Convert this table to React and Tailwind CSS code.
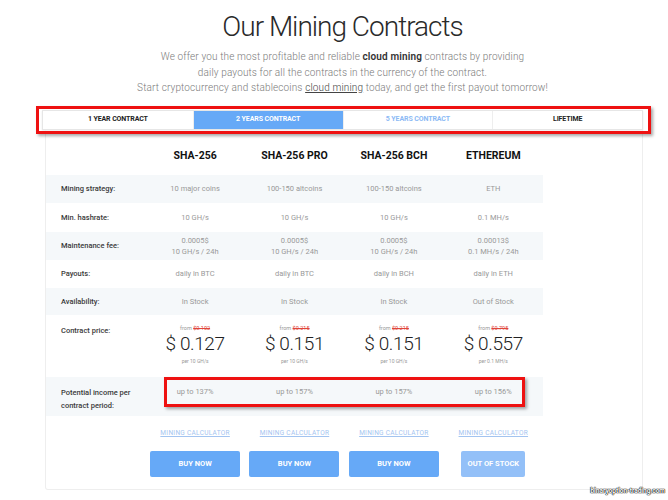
import React from 'react';

const plans = [
  { name: 'SHA-256', strategy: '10 major coins', hash: '10 GH/s', fee: ['0.0005$', '10 GH/s / 24h'], payouts: 'daily in BTC', avail: 'In Stock', old: '$0.102', price: '$ 0.127', per: 'per 10 GH/s', income: 'up to 137%', btn: 'BUY NOW' },
  { name: 'SHA-256 PRO', strategy: '100-150 altcoins', hash: '10 GH/s', fee: ['0.0005$', '10 GH/s / 24h'], payouts: 'daily in BTC', avail: 'In Stock', old: '$0.215', price: '$ 0.151', per: 'per 10 GH/s', income: 'up to 157%', btn: 'BUY NOW' },
  { name: 'SHA-256 BCH', strategy: '100-150 altcoins', hash: '10 GH/s', fee: ['0.0005$', '10 GH/s / 24h'], payouts: 'daily in BCH', avail: 'In Stock', old: '$0.215', price: '$ 0.151', per: 'per 10 GH/s', income: 'up to 157%', btn: 'BUY NOW' },
  { name: 'ETHEREUM', strategy: 'ETH', hash: '0.1 MH/s', fee: ['0.00013$', '0.1 MH/s / 24h'], payouts: 'daily in ETH', avail: 'Out of Stock', old: '$0.795', price: '$ 0.557', per: 'per 0.1 MH/s', income: 'up to 156%', btn: 'OUT OF STOCK', disabled: true },
];

const tabs = [
  { label: '1 YEAR CONTRACT', cls: 'text-[#222]' },
  { label: '2 YEARS CONTRACT', cls: 'bg-[#66a9f7] text-white' },
  { label: '5 YEARS CONTRACT', cls: 'text-[#8cbaf5]' },
  { label: 'LIFETIME', cls: 'text-[#222]' },
];

const Row = ({ label, h, striped, top, children }) => (
  <div className={`grid grid-cols-5 ${h} ${striped ? 'bg-[#f5f8fa]' : ''} ${top ? 'items-start pt-[9px]' : 'items-center'}`}>
    <div className="pl-[15px] text-[7.5px] font-medium text-[#3a3a3a] leading-[13px]">{label}</div>
    {children}
  </div>
);

const Cell = ({ children }) => (
  <div className="text-center text-[7.5px] text-[#999] leading-[11px]">{children}</div>
);

export default function App() {
  return (
    <div className="relative w-[668px] h-[500px] bg-white overflow-hidden font-['Roboto',sans-serif]">
      <div className="pl-[17px]">
        <h1 className="pt-[9px] text-center text-[28px] font-light tracking-[-1px] text-[#2a2a2a] leading-[36px]">Our Mining Contracts</h1>
        <div className="mt-[4px] text-center text-[10px] font-light tracking-[0.13px] text-[#7a7a7a] leading-[15.5px]">
          <p>We offer you the most profitable and reliable <b className="font-semibold text-[#333]">cloud mining</b> contracts by providing</p>
          <p>daily payouts for all the contracts in the currency of the contract.</p>
          <p>Start cryptocurrency and stablecoins <span className="underline text-[#444]">cloud mining</span> today, and get the first payout tomorrow!</p>
        </div>
      </div>

      <div className="mt-[14px] ml-[42px] w-[601px] h-[20px] grid grid-cols-4 border border-[#e6e6e6] bg-white shadow-[0_1px_2px_rgba(0,0,0,0.08)]">
        {tabs.map((t, i) => (
          <div key={t.label} className={`flex items-center justify-center text-[7px] font-bold tracking-[-0.1px] ${t.cls} ${i > 0 ? 'border-l border-[#eeeeee]' : ''}`}>{t.label}</div>
        ))}
      </div>

      <div className="ml-[45px] w-[598px] h-[360px] border border-t-0 border-[#eeeeee] rounded-b-[3px]">
        <div className="w-[497px]">
          <div className="grid grid-cols-5 h-[45px] items-center pt-[8px]">
            <div />
            {plans.map((p) => (
              <div key={p.name} className="text-center text-[10.5px] font-bold text-[#111]">{p.name}</div>
            ))}
          </div>
          <Row label="Mining strategy:" h="h-[28px]" striped>
            {plans.map((p) => <Cell key={p.name}>{p.strategy}</Cell>)}
          </Row>
          <Row label="Min. hashrate:" h="h-[29px]">
            {plans.map((p) => <Cell key={p.name}>{p.hash}</Cell>)}
          </Row>
          <Row label="Maintenance fee:" h="h-[28px]" striped>
            {plans.map((p) => <Cell key={p.name}>{p.fee[0]}<br />{p.fee[1]}</Cell>)}
          </Row>
          <Row label="Payouts:" h="h-[28px]">
            {plans.map((p) => <Cell key={p.name}>{p.payouts}</Cell>)}
          </Row>
          <Row label="Availability:" h="h-[27px]" striped>
            {plans.map((p) => <Cell key={p.name}>{p.avail}</Cell>)}
          </Row>
          <Row label="Contract price:" h="h-[62px]" top>
            {plans.map((p) => (
              <div key={p.name} className="flex flex-col items-center">
                <div className="text-[5.5px] text-[#999] leading-[8px]">from <span className="line-through text-[#e0453a]">{p.old}</span></div>
                <div className="text-[19px] font-light text-[#222] leading-[23px] tracking-[-0.4px]">{p.price}</div>
                <div className="mt-[2px] text-[5px] text-[#999] leading-[8px]">{p.per}</div>
              </div>
            ))}
          </Row>
          <Row label={<>Potential income per<br />contract period:</>} h="h-[39px]" striped top>
            {plans.map((p) => <Cell key={p.name}>{p.income}</Cell>)}
          </Row>
          <div className="grid grid-cols-5 h-[28px] items-center">
            <div />
            {plans.map((p) => (
              <div key={p.name} className="text-center">
                <span className="text-[6.5px] tracking-[0.3px] text-[#a3c4f0] underline">MINING CALCULATOR</span>
              </div>
            ))}
          </div>
          <div className="mt-[7px] grid grid-cols-5 h-[26px]">
            <div />
            {plans.map((p) => (
              <div key={p.name} className="flex justify-center">
                <button className={`h-[26px] rounded-[2px] text-[7.5px] font-bold text-white ${p.disabled ? 'w-[64px] bg-[#93c0f8]' : 'w-[90px] bg-[#66a9f7]'}`}>{p.btn}</button>
              </div>
            ))}
          </div>
        </div>
      </div>

      <div className="absolute left-[36px] top-[106px] w-[615px] h-[28px] border-[3px] border-[#ee1111] shadow-[2px_2px_3px_rgba(0,0,0,0.35)]" />
      <div className="absolute left-[164px] top-[377px] w-[361px] h-[30px] border-[3px] border-[#ee1111] shadow-[2px_2px_3px_rgba(0,0,0,0.35)]" />

      <div className="absolute right-[3px] bottom-[3px] text-[6.5px] font-bold text-white [text-shadow:0_0_1px_#000,0_0_1px_#000,0_0_1px_#000]">binaryoption-trading.com</div>
    </div>
  );
}
